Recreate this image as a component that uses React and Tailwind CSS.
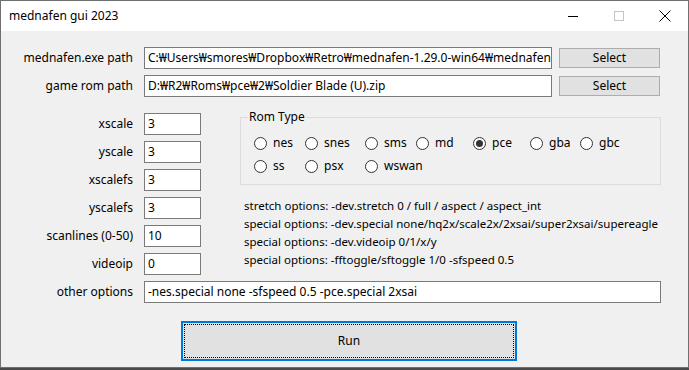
import React, { useState } from 'react';

const romTypes = [
  [
    { id: 'nes', w: 'w-[51px]' },
    { id: 'snes', w: 'w-[60px]' },
    { id: 'sms', w: 'w-[51px]' },
    { id: 'md', w: 'w-[57px]' },
    { id: 'pce', w: 'w-[57px]' },
    { id: 'gba', w: 'w-[50px]' },
    { id: 'gbc', w: 'w-[50px]' },
  ],
  [
    { id: 'ss', w: 'w-[51px]' },
    { id: 'psx', w: 'w-[60px]' },
    { id: 'wswan', w: 'w-[60px]' },
  ],
];

const scaleFields = [
  { label: 'xscale', value: '3' },
  { label: 'yscale', value: '3' },
  { label: 'xscalefs', value: '3' },
  { label: 'yscalefs', value: '3' },
  { label: 'scanlines (0-50)', value: '10' },
  { label: 'videoip', value: '0' },
];

const hints = [
  'stretch options: -dev.stretch 0 / full / aspect / aspect_int',
  'special options: -dev.special none/hq2x/scale2x/2xsai/super2xsai/supereagle',
  'special options: -dev.videoip 0/1/x/y',
  'special options: -fftoggle/sftoggle 1/0 -sfspeed 0.5',
];

const TextBox = ({ value, className }) => (
  <div className={`h-[22px] bg-white border border-[#7a7a7a] pl-[3px] flex items-center overflow-hidden whitespace-nowrap ${className}`}>
    {value}
  </div>
);

const Radio = ({ label, checked, onClick, w }) => (
  <div className={`flex items-center gap-[6px] ${w}`} onClick={onClick}>
    <div className="w-[13px] h-[13px] shrink-0 rounded-full border border-[#333] bg-white flex items-center justify-center">
      {checked && <div className="w-[7px] h-[7px] rounded-full bg-[#333]" />}
    </div>
    <span className="leading-[16px]">{label}</span>
  </div>
);

export default function App() {
  const [rom, setRom] = useState('pce');

  return (
    <div className="w-[689px] h-[370px] bg-[#4a4a4a] font-['Noto_Sans',sans-serif] text-[12px] text-black">
      <div className="w-[689px] h-[368px] border border-[#707070] bg-[#f0f0f0] flex flex-col">
        {/* Title bar */}
        <div className="h-[30px] bg-white flex items-center shrink-0">
          <span className="pl-[8px] flex-1">mednafen gui 2023</span>
          <div className="w-[46px] h-[30px] flex items-center justify-center">
            <div className="w-[10px] h-px bg-black" />
          </div>
          <div className="w-[46px] h-[30px] flex items-center justify-center">
            <div className="w-[10px] h-[10px] border border-[#c4c4c4]" />
          </div>
          <div className="w-[46px] h-[30px] flex items-center justify-center">
            <svg width="12" height="12" viewBox="0 0 12 12">
              <path d="M0.5 0.5 L11.5 11.5 M11.5 0.5 L0.5 11.5" stroke="#000" strokeWidth="1" />
            </svg>
          </div>
        </div>

        {/* Body */}
        <div className="flex flex-col pt-[16px]">
          <div className="flex items-center">
            <span className="w-[132px] text-right">mednafen.exe path</span>
            <TextBox className="ml-[11px] w-[408px]" value="C:₩Users₩smores₩Dropbox₩Retro₩mednafen-1.29.0-win64₩mednafen" />
            <button className="ml-[7px] w-[101px] h-[20px] bg-[#e1e1e1] border border-[#adadad] flex items-center justify-center">Select</button>
          </div>
          <div className="flex items-center mt-[6px]">
            <span className="w-[132px] text-right">game rom path</span>
            <TextBox className="ml-[11px] w-[408px]" value="D:₩R2₩Roms₩pce₩2₩Soldier Blade (U).zip" />
            <button className="ml-[7px] w-[101px] h-[20px] bg-[#e1e1e1] border border-[#adadad] flex items-center justify-center">Select</button>
          </div>

          <div className="flex mt-[12px]">
            <div className="flex flex-col gap-[6px] pt-[4px]">
              {scaleFields.map(f => (
                <div key={f.label} className="flex items-center">
                  <span className="w-[132px] text-right whitespace-nowrap">{f.label}</span>
                  <TextBox className="ml-[11px] w-[57px]" value={f.value} />
                </div>
              ))}
            </div>

            <div className="ml-[39px] flex flex-col">
              <fieldset className="w-[421px] border border-[#dcdcdc] pl-[13px] pt-[10px] pb-[10px]">
                <legend className="-ml-[6px] px-[1px] leading-[16px]">Rom Type</legend>
                <div className="flex flex-col gap-[7px]">
                  {romTypes.map((row, i) => (
                    <div key={i} className="flex">
                      {row.map(r => (
                        <Radio key={r.id} label={r.id} w={r.w} checked={rom === r.id} onClick={() => setRom(r.id)} />
                      ))}
                    </div>
                  ))}
                </div>
              </fieldset>
              <div className="mt-[12px] ml-[4px] flex flex-col text-[11.5px]">
                {hints.map(h => (
                  <span key={h} className="leading-[18px] whitespace-nowrap">{h}</span>
                ))}
              </div>
            </div>
          </div>

          <div className="flex items-center mt-[6px]">
            <span className="w-[132px] text-right">other options</span>
            <TextBox className="ml-[11px] w-[517px]" value="-nes.special none -sfspeed 0.5 -pce.special 2xsai" />
          </div>

          <div className="mt-[18px] ml-[180px]">
            <button className="w-[336px] h-[40px] bg-[#e1e1e1] border-2 border-[#0078d7] p-px">
              <div className="w-full h-full border border-dotted border-black flex items-center justify-center">Run</div>
            </button>
          </div>
        </div>
      </div>
    </div>
  );
}
